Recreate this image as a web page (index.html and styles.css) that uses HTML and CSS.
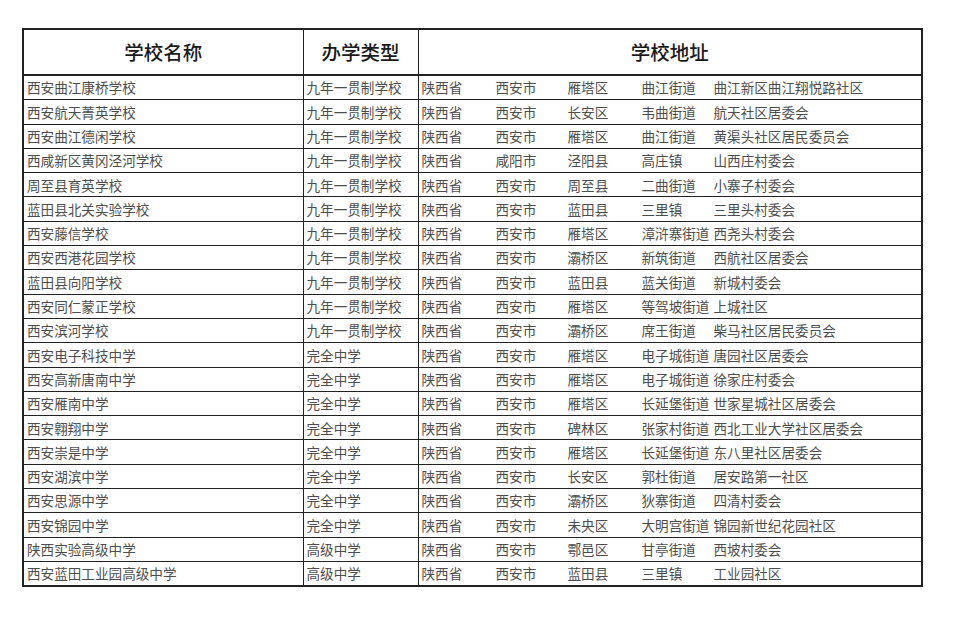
FILE: index.html
```html
<!DOCTYPE html>
<html lang="zh-CN">
<head>
<meta charset="utf-8">
<title>学校名单</title>
<link rel="stylesheet" href="styles.css">
</head>
<body>
<div class="page">
<table class="sheet">
<colgroup><col class="c-name"><col class="c-type"><col class="c-addr"></colgroup>
<thead>
<tr><th>学校名称</th><th>办学类型</th><th>学校地址</th></tr>
</thead>
<tbody>
<tr><td>西安曲江康桥学校</td><td>九年一贯制学校</td><td><div class="addr"><span>陕西省</span><span>西安市</span><span>雁塔区</span><span>曲江街道</span><span>曲江新区曲江翔悦路社区</span></div></td></tr>
<tr><td>西安航天菁英学校</td><td>九年一贯制学校</td><td><div class="addr"><span>陕西省</span><span>西安市</span><span>长安区</span><span>韦曲街道</span><span>航天社区居委会</span></div></td></tr>
<tr><td>西安曲江德闲学校</td><td>九年一贯制学校</td><td><div class="addr"><span>陕西省</span><span>西安市</span><span>雁塔区</span><span>曲江街道</span><span>黄渠头社区居民委员会</span></div></td></tr>
<tr><td>西咸新区黄冈泾河学校</td><td>九年一贯制学校</td><td><div class="addr"><span>陕西省</span><span>咸阳市</span><span>泾阳县</span><span>高庄镇</span><span>山西庄村委会</span></div></td></tr>
<tr><td>周至县育英学校</td><td>九年一贯制学校</td><td><div class="addr"><span>陕西省</span><span>西安市</span><span>周至县</span><span>二曲街道</span><span>小寨子村委会</span></div></td></tr>
<tr><td>蓝田县北关实验学校</td><td>九年一贯制学校</td><td><div class="addr"><span>陕西省</span><span>西安市</span><span>蓝田县</span><span>三里镇</span><span>三里头村委会</span></div></td></tr>
<tr><td>西安藤信学校</td><td>九年一贯制学校</td><td><div class="addr"><span>陕西省</span><span>西安市</span><span>雁塔区</span><span>漳浒寨街道</span><span>西尧头村委会</span></div></td></tr>
<tr><td>西安西港花园学校</td><td>九年一贯制学校</td><td><div class="addr"><span>陕西省</span><span>西安市</span><span>灞桥区</span><span>新筑街道</span><span>西航社区居委会</span></div></td></tr>
<tr><td>蓝田县向阳学校</td><td>九年一贯制学校</td><td><div class="addr"><span>陕西省</span><span>西安市</span><span>蓝田县</span><span>蓝关街道</span><span>新城村委会</span></div></td></tr>
<tr><td>西安同仁蒙正学校</td><td>九年一贯制学校</td><td><div class="addr"><span>陕西省</span><span>西安市</span><span>雁塔区</span><span>等驾坡街道</span><span>上城社区</span></div></td></tr>
<tr><td>西安滨河学校</td><td>九年一贯制学校</td><td><div class="addr"><span>陕西省</span><span>西安市</span><span>灞桥区</span><span>席王街道</span><span>柴马社区居民委员会</span></div></td></tr>
<tr><td>西安电子科技中学</td><td>完全中学</td><td><div class="addr"><span>陕西省</span><span>西安市</span><span>雁塔区</span><span>电子城街道</span><span>唐园社区居委会</span></div></td></tr>
<tr><td>西安高新唐南中学</td><td>完全中学</td><td><div class="addr"><span>陕西省</span><span>西安市</span><span>雁塔区</span><span>电子城街道</span><span>徐家庄村委会</span></div></td></tr>
<tr><td>西安雁南中学</td><td>完全中学</td><td><div class="addr"><span>陕西省</span><span>西安市</span><span>雁塔区</span><span>长延堡街道</span><span>世家星城社区居委会</span></div></td></tr>
<tr><td>西安翱翔中学</td><td>完全中学</td><td><div class="addr"><span>陕西省</span><span>西安市</span><span>碑林区</span><span>张家村街道</span><span>西北工业大学社区居委会</span></div></td></tr>
<tr><td>西安崇是中学</td><td>完全中学</td><td><div class="addr"><span>陕西省</span><span>西安市</span><span>雁塔区</span><span>长延堡街道</span><span>东八里社区居委会</span></div></td></tr>
<tr><td>西安湖滨中学</td><td>完全中学</td><td><div class="addr"><span>陕西省</span><span>西安市</span><span>长安区</span><span>郭杜街道</span><span>居安路第一社区</span></div></td></tr>
<tr><td>西安思源中学</td><td>完全中学</td><td><div class="addr"><span>陕西省</span><span>西安市</span><span>灞桥区</span><span>狄寨街道</span><span>四清村委会</span></div></td></tr>
<tr><td>西安锦园中学</td><td>完全中学</td><td><div class="addr"><span>陕西省</span><span>西安市</span><span>未央区</span><span>大明宫街道</span><span>锦园新世纪花园社区</span></div></td></tr>
<tr><td>陕西实验高级中学</td><td>高级中学</td><td><div class="addr"><span>陕西省</span><span>西安市</span><span>鄠邑区</span><span>甘亭街道</span><span>西坡村委会</span></div></td></tr>
<tr><td>西安蓝田工业园高级中学</td><td>高级中学</td><td><div class="addr"><span>陕西省</span><span>西安市</span><span>蓝田县</span><span>三里镇</span><span>工业园社区</span></div></td></tr>
</tbody>
</table>
</div>
</body>
</html>
```
FILE: styles.css
```css
html, body {
  margin: 0;
  padding: 0;
  background: #ffffff;
}
.page {
  padding: 28px 0 0 22px;
}
.sheet {
  border-collapse: collapse;
  table-layout: fixed;
  width: 899px;
  border: 2px solid #222;
  font-family: "Noto Sans CJK SC", "Noto Sans", sans-serif;
}
.c-name { width: 280px; }
.c-type { width: 115px; }
.c-addr { width: 504px; }
.sheet th {
  height: 44px;
  padding: 0;
  border: 1px solid #222;
  border-bottom-width: 2px;
  font-size: 19.5px;
  font-weight: 500;
  color: #1a1a1a;
  text-align: center;
  vertical-align: middle;
  line-height: 1;
}
.sheet td {
  height: 22.3px;
  padding: 1px 0 0 3px;
  border: 1px solid #222;
  border-top-width: 1.5px;
  font-size: 13.6px;
  color: #4d4d4d;
  line-height: 1;
  vertical-align: middle;
  white-space: nowrap;
  overflow: hidden;
}
.addr {
  display: grid;
  grid-template-columns: 74px 72px 74px 72px 1fr;
}
.addr span {
  white-space: nowrap;
}
```
